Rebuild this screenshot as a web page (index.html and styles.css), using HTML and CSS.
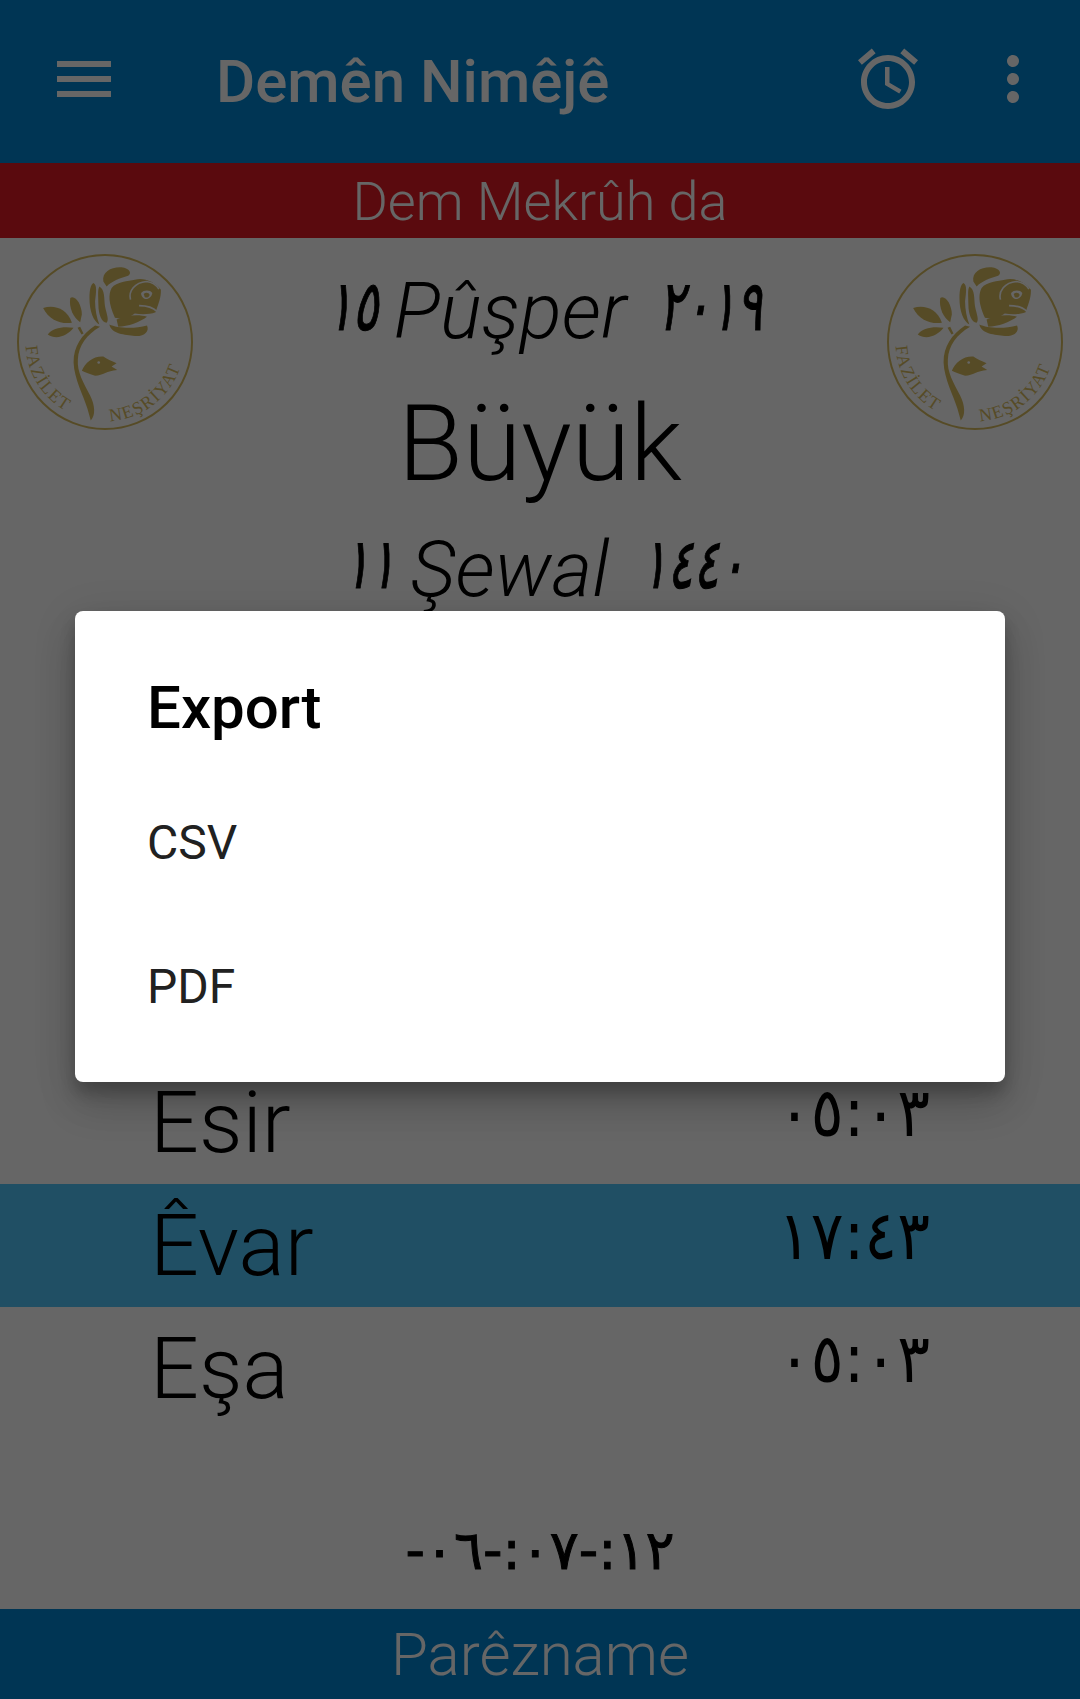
FILE: index.html
```html
<!DOCTYPE html>
<html lang="ku">
<head>
  <meta charset="UTF-8">
  <title>Demên Nimêjê</title>
  <link rel="stylesheet" href="styles.css">
</head>
<body>
  <div class="app">
    <header class="toolbar">
      <svg class="icon" viewBox="0 0 24 24"><path d="M3 18h18v-2H3v2zm0-5h18v-2H3v2zm0-7v2h18V6H3z"/></svg>
      <h1 class="title">Demên Nimêjê</h1>
      <svg class="icon alarm" viewBox="0 0 24 24"><path d="M22 5.72l-4.6-3.86-1.29 1.53 4.6 3.86L22 5.72zM7.88 3.39L6.6 1.86 2 5.71l1.29 1.53 4.59-3.85zM12.5 8H11v6l4.75 2.85.75-1.23-4-2.37V8zM12 4c-4.97 0-9 4.03-9 9s4.03 9 9 9 9-4.03 9-9-4.03-9-9-9zm0 16c-3.87 0-7-3.13-7-7s3.13-7 7-7 7 3.13 7 7-3.13 7-7 7z"/></svg>
      <svg class="icon more" viewBox="0 0 24 24"><path d="M12 8c1.1 0 2-.9 2-2s-.9-2-2-2-2 .9-2 2 .9 2 2 2zm0 2c-1.1 0-2 .9-2 2s.9 2 2 2 2-.9 2-2-.9-2-2-2zm0 6c-1.1 0-2 .9-2 2s.9 2 2 2 2-.9 2-2-.9-2-2-2z"/></svg>
    </header>
    <div class="status">Dem Mekrûh da</div>

    <main class="content">
      <section class="dates">
        <svg class="logo" viewBox="46 39 538 538">
          <g id="rose">
            <circle class="logo-ring" cx="315" cy="308" r="263"/>
            <path class="logo-fill" d="M310 125C305 95 335 80 365 82C390 85 397 100 385 108C360 115 335 125 320 140Z"/>
            <path class="logo-fill" d="M335 145C350 125 385 125 405 120C430 112 465 125 484 150C485 175 475 195 468 218C450 225 425 225 405 222C385 238 365 240 345 235C325 190 325 165 335 145Z"/>
            <path class="logo-line" d="M392 180C385 155 405 128 440 125C455 127 470 135 478 148"/>
            <path class="logo-line" d="M418 198C440 198 462 205 472 216"/>
            <path class="logo-cut" d="M424 160C432 150 452 150 458 160C456 172 446 180 436 178C428 175 424 168 424 160Z"/>
            <path class="logo-fill" d="M432 163C438 157 448 159 450 166C448 173 440 176 435 172Z"/>
            <path class="logo-fill" d="M350 240C385 225 420 225 442 232C420 248 385 262 355 262Z"/>
            <path class="logo-fill" d="M328 255C350 265 400 270 442 258C450 275 435 292 405 290C375 285 335 285 328 255Z"/>
            <path class="logo-fill" d="M280 130C292 135 288 160 285 185C285 210 290 235 298 255C280 245 268 215 268 175C268 150 272 135 280 130Z"/>
            <path class="logo-fill" d="M298 140C315 150 312 175 315 200C320 225 328 240 320 250C305 250 295 225 295 195C295 170 292 150 298 140Z"/>
            <path class="logo-fill" d="M128 205C160 195 200 205 215 250C180 255 145 240 128 205Z"/>
            <path class="logo-fill" d="M210 175C225 165 245 195 245 225L240 248C220 235 205 205 210 175Z"/>
            <path class="logo-fill" d="M142 285C155 265 190 260 220 265C205 285 170 305 142 285Z"/>
            <path class="logo-fill" d="M232 265L240 262L250 282L244 285Z"/>
            <path class="logo-fill" d="M285 258C245 285 220 320 220 370C222 420 250 470 262 510L272 545C287 530 285 500 270 470C250 430 230 400 233 360C235 320 260 285 300 262Z"/>
            <path class="logo-fill" d="M245 395C255 370 280 350 310 352C320 360 335 365 350 372L335 382L352 393C320 395 310 410 285 410C270 405 255 400 245 395Z"/>
            <circle class="logo-cut" cx="296" cy="370" r="4"/>
            <path id="logo-arc" class="logo-arc" d="M75 308A240 240 0 0 0 555 308"/>
            <text class="logo-text" letter-spacing="4"><textPath href="#logo-arc" startOffset="12">FAZİLET</textPath></text>
            <text class="logo-text" letter-spacing="4"><textPath href="#logo-arc" startOffset="392">NEŞRİYAT</textPath></text>
          </g>
        </svg>
        <div class="dates-mid">
          <div class="date-line"><span class="num day">١٥</span><em>Pûşper</em><span class="num year">٢٠١٩</span></div>
          <div class="size">Büyük</div>
          <div class="date-line hijri"><span class="num day">١١</span><em>Şewal</em><span class="num year">١٤٤٠</span></div>
        </div>
        <svg class="logo" viewBox="46 39 538 538"><use href="#rose"/></svg>
      </section>

      <ul class="times">
        <li class="row"><span>Esir</span><span class="num">٠٥:٠٣</span></li>
        <li class="row now"><span>Êvar</span><span class="num">١٧:٤٣</span></li>
        <li class="row"><span>Eşa</span><span class="num">٠٥:٠٣</span></li>
      </ul>

      <div class="clock num"><bdo dir="ltr">-٠٦-:٠٧-:١٢</bdo></div>
    </main>

    <footer class="footer">Parêzname</footer>
  </div>

  <div class="scrim">
    <div class="dialog">
      <h2 class="dialog-title">Export</h2>
      <div class="dialog-item">CSV</div>
      <div class="dialog-item">PDF</div>
    </div>
  </div>
</body>
</html>
```

FILE: styles.css
```css
* {
  box-sizing: border-box;
}
html, body {
  margin: 0;
  height: 100%;
  overflow: hidden;
}
body {
  position: relative;
  font-family: Roboto, "Noto Sans", sans-serif;
  background-color: #ffffff;
  color: #000000;
}
.app {
  display: flex;
  flex-direction: column;
  height: 100%;
}

/* toolbar */
.toolbar {
  display: flex;
  align-items: center;
  height: 163px;
  padding: 0 31px 5px 48px;
  background-color: #0085d2;
  color: #ffffff;
}
.icon {
  width: 72px;
  height: 72px;
  flex: none;
  fill: #ffffff;
}
.title {
  margin: 4px 0 0 96px;
  font-size: 60px;
  font-weight: 500;
  flex: 1;
}
.more {
  margin-left: 53px;
}
.status {
  height: 75px;
  padding-top: 3px;
  line-height: 72px;
  text-align: center;
  font-size: 54px;
  font-weight: 300;
  background-color: #e11923;
  color: #ffffff;
}

/* dates */
.content {
  flex: 1;
}
.dates {
  display: flex;
  align-items: flex-start;
  height: 823px;
  padding: 15px 16px 0 16px;
}
.logo {
  width: 178px;
  height: 178px;
  flex: none;
}
.logo-ring {
  fill: none;
  stroke: #d8bc60;
  stroke-width: 6;
}
.logo-fill {
  fill: #d8bc60;
}
.logo-cut {
  fill: #ffffff;
}
.logo-line {
  fill: none;
  stroke: #ffffff;
  stroke-width: 5;
}
.logo-arc {
  fill: none;
}
.logo-text {
  font-family: "Liberation Serif", serif;
  font-size: 54px;
  fill: #d8bc60;
}
.dates-mid {
  flex: 1;
  padding-top: 13px;
  text-align: center;
}
.date-line {
  display: flex;
  justify-content: center;
  align-items: baseline;
  height: 90px;
  margin-left: 10px;
  font-size: 78px;
  font-weight: 300;
}
.date-line em {
  margin: 0 30px 0 13px;
}
/* the digit font runs wider than the one in the app, so squeeze it */
.date-line .num {
  font-size: 70px;
  font-style: italic;
  font-weight: 400;
  -webkit-text-stroke: 1px #000000;
  transform: translateY(-8px) scaleX(0.69);
}
.day {
  margin: 0 -10px;
}
.year {
  margin: 0 -21px;
}
.size {
  font-size: 106px;
  font-weight: 300;
  line-height: 124px;
  margin-top: 26px;
}
.hijri {
  margin-top: 18px;
}
.num {
  font-family: "DejaVu Sans", sans-serif;
}

/* prayer times */
.times {
  margin: 0;
  padding: 0;
  list-style: none;
}
.row {
  display: flex;
  justify-content: space-between;
  align-items: center;
  height: 123px;
  padding: 0 150px;
  font-size: 86px;
  font-weight: 300;
}
.row .num {
  margin-bottom: 20px;
  font-size: 68px;
  font-weight: 400;
  transform: scaleX(0.9);
  transform-origin: right center;
}
.now {
  background-color: #52c5fa;
}
.clock {
  display: flex;
  justify-content: center;
  align-items: center;
  height: 179px;
  font-size: 54px;
  padding-top: 62px;
  -webkit-text-stroke: 1px #000000;
}

.footer {
  height: 90px;
  padding-top: 1px;
  line-height: 90px;
  text-align: center;
  font-size: 60px;
  font-weight: 300;
  background-color: #0085d2;
  color: #ffffff;
}

/* export dialog */
.scrim {
  position: absolute;
  inset: 0;
  display: flex;
  justify-content: center;
  align-items: center;
  padding-bottom: 6px;
  background-color: rgba(0, 0, 0, 0.6);
}
.dialog {
  width: 930px;
  height: 471px;
  padding-top: 62px;
  border-radius: 8px;
  background-color: #ffffff;
  box-shadow: 0 24px 38px rgba(0, 0, 0, 0.14), 0 9px 46px rgba(0, 0, 0, 0.12), 0 11px 15px rgba(0, 0, 0, 0.2);
}
.dialog-title {
  margin: 0 0 28px;
  padding-left: 72px;
  font-size: 60px;
  line-height: 70px;
  font-weight: 500;
}
.dialog-item {
  height: 144px;
  line-height: 144px;
  padding-left: 72px;
  font-size: 48px;
  color: #212121;
}
```
